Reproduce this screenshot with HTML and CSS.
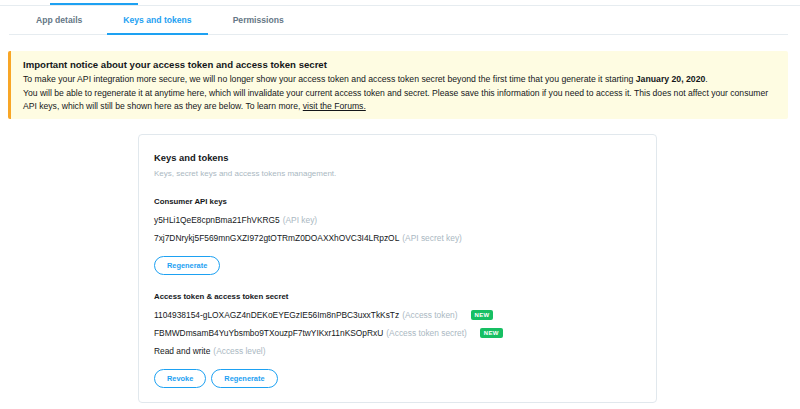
FILE: index.html
```html
<!DOCTYPE html>
<html lang="en">
<head>
    <meta charset="UTF-8">
    <meta name="viewport" content="width=device-width, initial-scale=1.0">
    <title>Keys and tokens</title>
    <link rel="stylesheet" href="styles.css">
</head>
<body>
    <div class="topbar">
        <span class="topbar-active"></span>
    </div>

    <nav class="tabs">
        <a href="#" class="tab">App details</a>
        <a href="#" class="tab tab-active">Keys and tokens</a>
        <a href="#" class="tab">Permissions</a>
    </nav>

    <div class="notice">
        <p class="notice-title">Important notice about your access token and access token secret</p>
        <p class="notice-text">To make your API integration more secure, we will no longer show your access token and access token secret beyond the first time that you generate it starting <b>January 20, 2020</b>.</p>
        <p class="notice-text notice-text-small">You will be able to regenerate it at anytime here, which will invalidate your current access token and secret. Please save this information if you need to access it. This does not affect your consumer API keys, which will still be shown here as they are below. To learn more, <a href="#">visit the Forums.</a></p>
    </div>

    <section class="card">
        <h2 class="card-title">Keys and tokens</h2>
        <p class="card-subtitle">Keys, secret keys and access tokens management.</p>

        <h3 class="group-title">Consumer API keys</h3>
        <div class="key-row">y5HLi1QeE8cpnBma21FhVKRG5 <span class="key-label">(API key)</span></div>
        <div class="key-row">7xj7DNrykj5F569mnGXZI972gtOTRmZ0DOAXXhOVC3I4LRpzOL <span class="key-label">(API secret key)</span></div>
        <div class="actions">
            <button class="btn">Regenerate</button>
        </div>

        <h3 class="group-title group-title-spaced">Access token &amp; access token secret</h3>
        <div class="key-row">1104938154-gLOXAGZ4nDEKoEYEGzIE56Im8nPBC3uxxTkKsTz <span class="key-label">(Access token)</span><span class="badge">NEW</span></div>
        <div class="key-row">FBMWDmsamB4YuYbsmbo9TXouzpF7twYIKxr11nKSOpRxU <span class="key-label">(Access token secret)</span><span class="badge">NEW</span></div>
        <div class="key-row">Read and write <span class="key-label">(Access level)</span></div>
        <div class="actions">
            <button class="btn">Revoke</button>
            <button class="btn">Regenerate</button>
        </div>
    </section>
</body>
</html>
```

FILE: styles.css
```css
body {
    margin: 0;
    padding: 0;
    font-family: "Liberation Sans", Arial, sans-serif;
    color: #14171a;
    background: #ffffff;
}

/* barra superior com o indicador da aba anterior */
.topbar {
    display: flex;
    align-items: flex-end;
    height: 5px;
    border-bottom: 1px solid #e6ecf0;
}
.topbar-active {
    display: block;
    width: 88px;
    height: 2px;
    margin-left: 50px;
    background: #1da1f2;
}

/* abas */
.tabs {
    display: flex;
    gap: 9px;
    margin: 0 12px 0 9px;
    padding-left: 11px;
    border-bottom: 1px solid #e6ecf0;
}
.tab {
    display: block;
    height: 25px;
    line-height: 25px;
    padding: 2px 16px 0 16px;
    margin-bottom: -1px;
    border-bottom: 2px solid transparent;
    font-size: 8.6px;
    font-weight: bold;
    color: #657786;
    text-decoration: none;
}
.tab-active {
    color: #1da1f2;
    border-bottom-color: #1da1f2;
}

/* aviso amarelo */
.notice {
    margin: 16px 12px 0 8px;
    padding: 6px 12px 5px 12px;
    background: #fefce2;
    border-left: 3px solid #f8a626;
    border-radius: 2px;
}
.notice p {
    margin: 0;
}
.notice-title {
    font-size: 9.6px;
    font-weight: bold;
    line-height: 15px;
    margin-bottom: 1px !important;
}
.notice-text {
    font-size: 8.7px;
    line-height: 13.5px;
}
.notice-text-small {
    font-size: 8.6px;
}
.notice-text a {
    color: #14171a;
}

/* cartao de chaves */
.card {
    width: 487px;
    margin: 15px 0 0 138px;
    padding: 15px 15px 14px 15px;
    border: 1px solid #e1e8ed;
    border-radius: 4px;
}
.card-title {
    margin: 0;
    font-size: 9.4px;
    line-height: 16px;
}
.card-subtitle {
    margin: 0;
    font-size: 8px;
    line-height: 16px;
    color: #aab8c2;
}
.group-title {
    margin: 11px 0 0 0;
    font-size: 7.8px;
    line-height: 18px;
}
.group-title-spaced {
    margin-top: 13px;
}
.key-row {
    display: flex;
    align-items: center;
    gap: 3px;
    height: 18px;
    font-size: 8.4px;
}
.key-label {
    color: #aab8c2;
}
.badge {
    display: inline-block;
    margin-left: 10px;
    padding: 0 4px;
    height: 10px;
    line-height: 10px;
    border-radius: 2px;
    background: #17bf63;
    color: #ffffff;
    font-size: 6px;
    font-weight: bold;
    letter-spacing: 0.3px;
}
.actions {
    display: flex;
    gap: 5px;
    margin-top: 9px;
}
.btn {
    height: 19px;
    padding: 0 12px;
    border: 1px solid #1da1f2;
    border-radius: 10px;
    background: #ffffff;
    color: #1da1f2;
    font-family: inherit;
    font-size: 7.4px;
    font-weight: bold;
    cursor: pointer;
}
```
